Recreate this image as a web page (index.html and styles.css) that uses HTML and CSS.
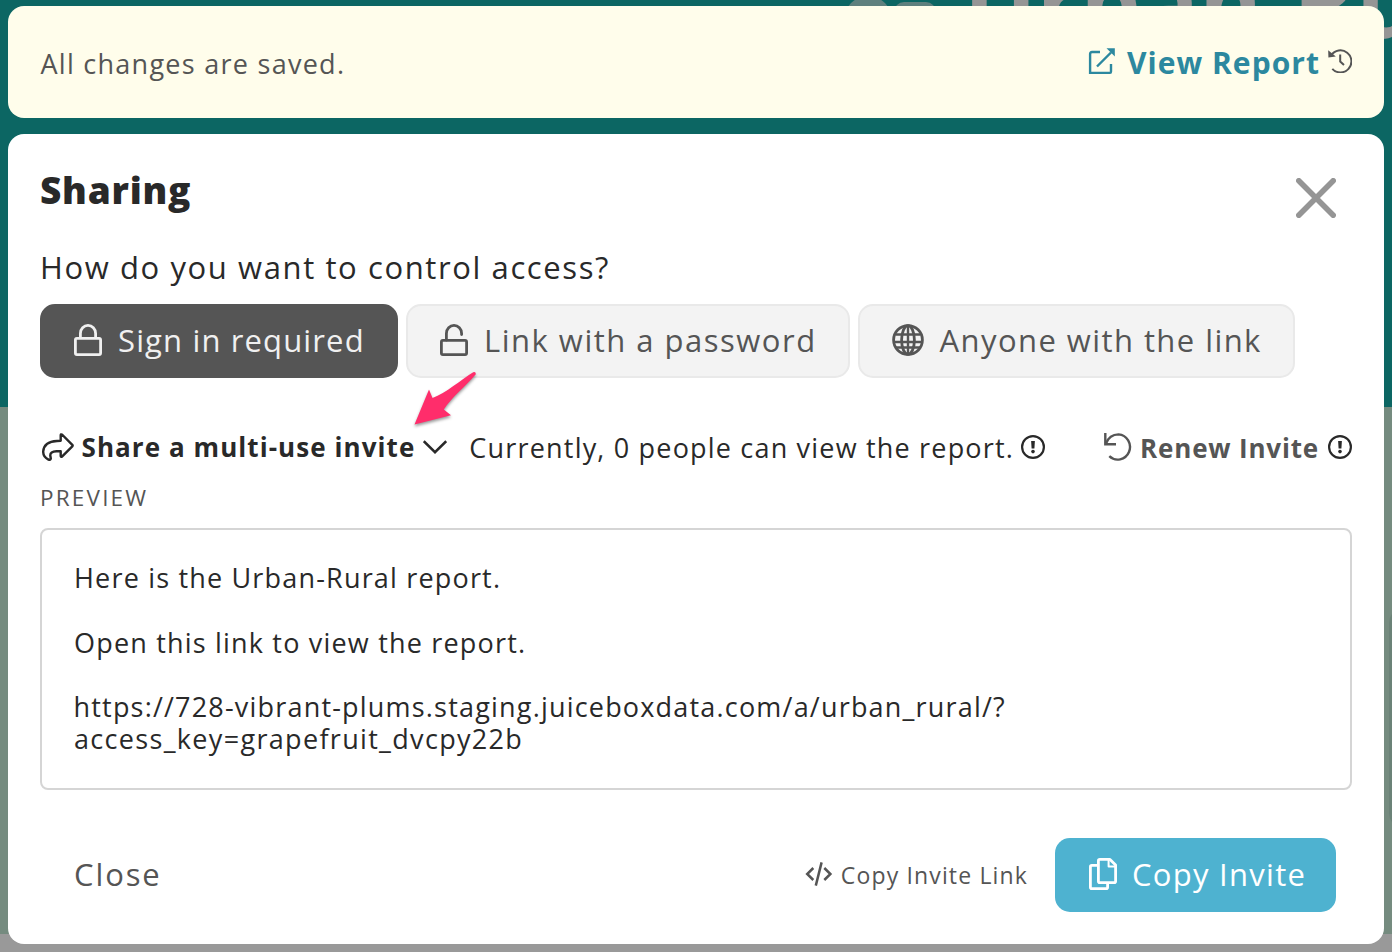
FILE: index.html
```html
<!DOCTYPE html>
<html lang="en">
<head>
<meta charset="utf-8">
<title>Sharing</title>
<link rel="stylesheet" href="styles.css">
</head>
<body>
<div class="backdrop" aria-hidden="true">
  <div class="hero">
    <span class="dot"></span>
    <span class="chip"></span>
    <span class="hero-title">Urban-Rural</span>
  </div>
  <div class="section"><span class="section-card"></span></div>
</div>
<main class="page">
  <section class="toast">
    <span class="toast-text">All changes are saved.</span>
    <a class="view-report">
      <svg class="icon" width="28" height="28" viewBox="0 0 28 28" fill="none" stroke="currentColor" stroke-width="2.4"><path d="M12 5H4Q2.100 5 2.100 7V25.900H22Q23 25.900 23 24.500V17" /><path d="M9 19.500 23 5.500"/><path d="M18.500 1.200H26.800V9.500Z" fill="currentColor" stroke="none"/></svg>
      <span class="view-text">View Report</span>
    </a>
    <svg class="icon history" width="24" height="24" viewBox="0 0 24 24" fill="none" stroke="currentColor" stroke-width="2"><path d="M3.200 6.400A11 11 0 1 1 4.300 19.800"/><path d="M12.200 5.500V12.500L16 16"/><path d="M.2 1.200 .4 8.600 7.800 7.600Z" fill="currentColor" stroke="none"/></svg>
  </section>

  <section class="modal">
    <header class="modal-head">
      <h1 class="title">Sharing</h1>
      <svg class="close-x" width="40" height="40" viewBox="0 0 40 40" stroke="currentColor" stroke-width="5.600" stroke-linecap="round"><path d="M2.800 2.800 37.200 37.200M37.200 2.800 2.800 37.200"/></svg>
    </header>
    <p class="question">How do you want to control access?</p>
    <div class="options">
      <button class="option option-signin">
        <svg class="icon" width="28" height="32" viewBox="0 0 28 32" fill="none" stroke="currentColor" stroke-width="2.800"><rect x="1.400" y="14.400" width="25.200" height="16.200" rx="1.500"/><path d="M6.400 14V9.400a7.600 8 0 0 1 15.200 0V14"/></svg>
        <span class="t-signin">Sign in required</span>
      </button>
      <button class="option option-password">
        <svg class="icon" width="28" height="32" viewBox="0 0 28 32" fill="none" stroke="currentColor" stroke-width="2.800"><rect x="1.400" y="16.400" width="25.200" height="14.200" rx="1.500"/><path d="M6.400 16V9.400a7.600 8 0 0 1 15.200 0V10.500" stroke-linecap="round"/></svg>
        <span class="t-password">Link with a password</span>
      </button>
      <button class="option option-anyone">
        <svg class="icon" width="32" height="32" viewBox="0 0 32 32" fill="none" stroke="currentColor" stroke-width="2.800"><circle cx="16" cy="16" r="14.400"/><ellipse cx="16" cy="16" rx="6.400" ry="14.400"/><path d="M16 2V30M3.500 10.500H28.500M2 18H30M4 23.500H28" stroke-width="2.400"/></svg>
        <span class="t-anyone">Anyone with the link</span>
      </button>
    </div>

    <div class="invite-row">
      <svg class="icon" width="32" height="28" viewBox="0 0 32 28" fill="none" stroke="currentColor" stroke-width="2.400" stroke-linejoin="round"><path d="M18.700 2.200Q18.700 1 20 1.500L30.300 11.800Q31 12.600 30.300 13.400L20 23.700Q18.700 24.200 18.700 23V18.200H14.500Q8 18.600 8.300 22.500L8.800 25.500Q8.500 27.300 6.500 26.600Q1 24 1.200 18.500Q2 8.500 15 8L18.700 7.800Z"/></svg>
      <span class="t-share">Share a multi-use invite</span>
      <svg class="chevron" width="24" height="14" viewBox="0 0 24 14" fill="none" stroke="currentColor" stroke-width="2.500"><path d="M.8 1.200 12 12.200 23.200 1.200"/></svg>
      <span class="t-current">Currently, 0 people can view the report.</span>
      <svg class="info" width="24" height="24" viewBox="0 0 24 24"><circle cx="12" cy="12" r="10.900" fill="none" stroke="currentColor" stroke-width="2.200"/><path d="M10.100 6h3.800l-.5 7.600h-2.800Z" fill="currentColor"/><circle cx="12" cy="16.600" r="1.800" fill="currentColor"/></svg>
      <svg class="renew-icon" width="28" height="28" viewBox="0 0 28 28" fill="none" stroke="currentColor" stroke-width="2.400"><path d="M1.300 0V11.200H12"/><path d="M1.800 10.700Q5.500 1.400 14.500 1.400A12.300 12.600 0 1 1 5.300 23.200"/></svg>
      <span class="t-renew">Renew Invite</span>
      <svg class="info info-end" width="24" height="24" viewBox="0 0 24 24"><circle cx="12" cy="12" r="10.900" fill="none" stroke="currentColor" stroke-width="2.200"/><path d="M10.100 6h3.800l-.5 7.600h-2.800Z" fill="currentColor"/><circle cx="12" cy="16.600" r="1.800" fill="currentColor"/></svg>
    </div>

    <div class="preview-label">PREVIEW</div>
    <div class="preview">
      <p class="t-here">Here is the Urban-Rural report.</p>
      <p class="t-open">Open this link to view the report.</p>
      <div class="link">
        <p class="t-url">https://728-vibrant-plums.staging.juiceboxdata.com/a/urban_rural/?</p>
        <p class="t-key">access_key=grapefruit_dvcpy22b</p>
      </div>
    </div>

    <footer class="modal-foot">
      <span class="t-close">Close</span>
      <svg class="code" width="28" height="24" viewBox="0 0 28 24" fill="none" stroke="currentColor" stroke-width="2.500"><path d="M8.300 6 2.200 12 8.300 18M19.300 6 25.400 12 19.300 18M16.600.4 10.800 23.600"/></svg>
      <span class="t-copylink">Copy Invite Link</span>
      <button class="copy">
        <svg class="icon" width="28" height="32" viewBox="0 0 28 32" fill="none" stroke="currentColor" stroke-width="2.800" stroke-linejoin="round"><path d="M9.500 7.400H2.800Q1.400 7.400 1.400 8.800V29.200Q1.400 30.600 2.800 30.600H17.200Q18.600 30.600 18.600 29.200V25.500"/><path d="M10.800 1.400H21L26.600 7V23.200Q26.600 24.600 25.200 24.600H10.800Q9.400 24.600 9.400 23.200V2.800Q9.400 1.400 10.800 1.400Z"/><path d="M19.600 2V8.600H26" stroke-width="2"/></svg>
        <span class="t-copy">Copy Invite</span>
      </button>
    </footer>
  </section>
</main>
<svg class="pointer" width="68" height="60" viewBox="0 0 68 60"><path d="M4.500 54.500 19 19.500 22.500 28C36 23 51 10 63.200 2.300Q66 1.500 65.800 4.300C55 17 41 28 33.800 39.500L41 45.200Z" fill="#ff2d6b"/></svg>
</body>
</html>
```

FILE: styles.css
```css
* { box-sizing: border-box; margin: 0; }
body {
  position: relative;
  width: 1392px;
  height: 952px;
  overflow: hidden;
  background: #999;
  color: #292929;
  font-family: "Open Sans", "Noto Sans", sans-serif;
}
svg { display: block; flex: none; }
span, p, h1 { white-space: nowrap; }

/* Dimmed report page under the dialog */
.backdrop { position: absolute; inset: 0; overflow: hidden; }
.hero { position: relative; height: 407px; background: #0c6663; }
.dot { position: absolute; left: 844px; top: -4px; width: 48px; height: 48px; border-radius: 50%; background: #5f807e; }
.chip { position: absolute; left: 894px; top: 2px; width: 42px; height: 36px; border-radius: 10px; background: #5f807e; }
.hero-title {
  position: absolute;
  left: 964px;
  top: -59px;
  color: #959595;
  font-size: 96px;
  font-weight: 700;
  line-height: 120px;
  letter-spacing: 0;
}
.section { position: relative; height: 527px; background: #758b7f; }
.section-card { position: absolute; left: 1389px; top: 200px; width: 60px; height: 222px; border-radius: 16px; background: #6b8277; }

.page { position: relative; padding: 6px 8px 8px; display: flex; flex-direction: column; gap: 16px; height: 952px; }
.toast { display: flex; align-items: center; height: 112px; padding: 0 32px; border-radius: 16px; background: #fffdeb; color: #555; }
.toast-text { margin-left: .5px; font-size: 27px; letter-spacing: 1.27px; line-height: 32px; padding-top: 3px; }
.view-report { display: flex; align-items: center; gap: 11px; margin-left: auto; color: #2c889f; }
.view-report .icon { margin-top: -3px; }
.view-text { padding-top: 1px; font-size: 30px; font-weight: 700; letter-spacing: 1.04px; line-height: 40px; }
.history { margin-left: 8px; margin-top: -2px; }

.modal { flex: 1; display: flex; flex-direction: column; padding: 32px 32px 32px; border-radius: 16px; background: #fff; }
.modal-head { display: flex; justify-content: space-between; height: 48px; }
.title { font-size: 37px; font-weight: 800; line-height: 48px; letter-spacing: .77px; }
.close-x { margin: 12px 16px 0 0; color: #959595; }
.question { margin-top: 33px; font-size: 31px; line-height: 40px; letter-spacing: 1.6px; }
.options { display: flex; gap: 8px; margin-top: 17px; }
.option {
  display: flex;
  align-items: center;
  height: 74px;
  padding: 0 0 0 32px;
  border: 2px solid #e9e9e9;
  border-radius: 15px;
  background: #f3f3f3;
  color: #555;
  font: 31px/40px "Open Sans", sans-serif;
}
.option span, .copy span { padding-bottom: 2px; }
.option .icon { margin-top: -2px; margin-right: 16px; }
.option-signin { width: 358px; border-color: #555; background: #555; color: #f0f0f0; }
.option-password { width: 444px; }
.option-anyone { width: 437px; }
.option-anyone .icon { margin-left: -.5px; }
.t-signin { letter-spacing: 1.14px; }
.t-password { letter-spacing: 1.5px; }
.t-anyone { letter-spacing: 1.43px; }

.invite-row { display: flex; align-items: center; height: 48px; margin-top: 45px; padding-left: 2px; font-size: 27px; line-height: 32px; }
.t-share { margin-left: 7.500px; font-size: 26px; font-weight: 700; letter-spacing: 1.07px; }
.chevron { margin-left: 8px; }
.t-current { margin-left: 22px; padding-top: 2px; letter-spacing: 1.19px; }
.info { margin-left: 7px; }
.renew-icon { margin-left: auto; margin-top: -1px; color: #555; }
.t-renew { margin-left: 8px; padding-top: 1px; font-size: 26px; font-weight: 700; letter-spacing: .82px; color: #555; }
.info-end { margin-left: 9px; }

.preview-label { margin-top: 15px; color: #555; font-size: 22.500px; line-height: 24px; letter-spacing: 2.2px; }
.preview {
  display: flex;
  flex-direction: column;
  gap: 32.250px;
  height: 262px;
  margin-top: 18px;
  padding: 32px 32px 0;
  border: 2px solid #d5d5d5;
  border-radius: 8px;
  font-size: 27px;
  line-height: 32.250px;
}
.t-here { letter-spacing: 1.18px; }
.t-open { letter-spacing: 1.19px; }
.t-url { margin-left: -.5px; letter-spacing: 1.19px; }
.t-key { letter-spacing: 1.32px; }

.modal-foot { display: flex; align-items: center; height: 74px; margin-top: 48px; padding: 0 16px 0 34px; color: #555; }
.t-close { padding-bottom: 2px; font-size: 31px; line-height: 40px; letter-spacing: 1.9px; }
.code { margin-left: auto; margin-top: -2px; }
.t-copylink { margin-left: 8px; padding-bottom: 1px; font-size: 23px; line-height: 32px; letter-spacing: 1.15px; }
.copy {
  display: flex;
  align-items: center;
  width: 281px;
  height: 74px;
  margin-left: 27px;
  padding: 0 0 0 34px;
  border: 0;
  border-radius: 15px;
  background: #4eb2d0;
  color: #fff;
  font: 31px/40px "Open Sans", sans-serif;
}
.copy .icon { margin-top: -2px; margin-right: 15px; }
.t-copy { letter-spacing: 1.27px; }

.pointer { position: absolute; left: 410px; top: 370px; filter: drop-shadow(0 2px 1.500px rgba(0, 0, 0, .4)); }
```
